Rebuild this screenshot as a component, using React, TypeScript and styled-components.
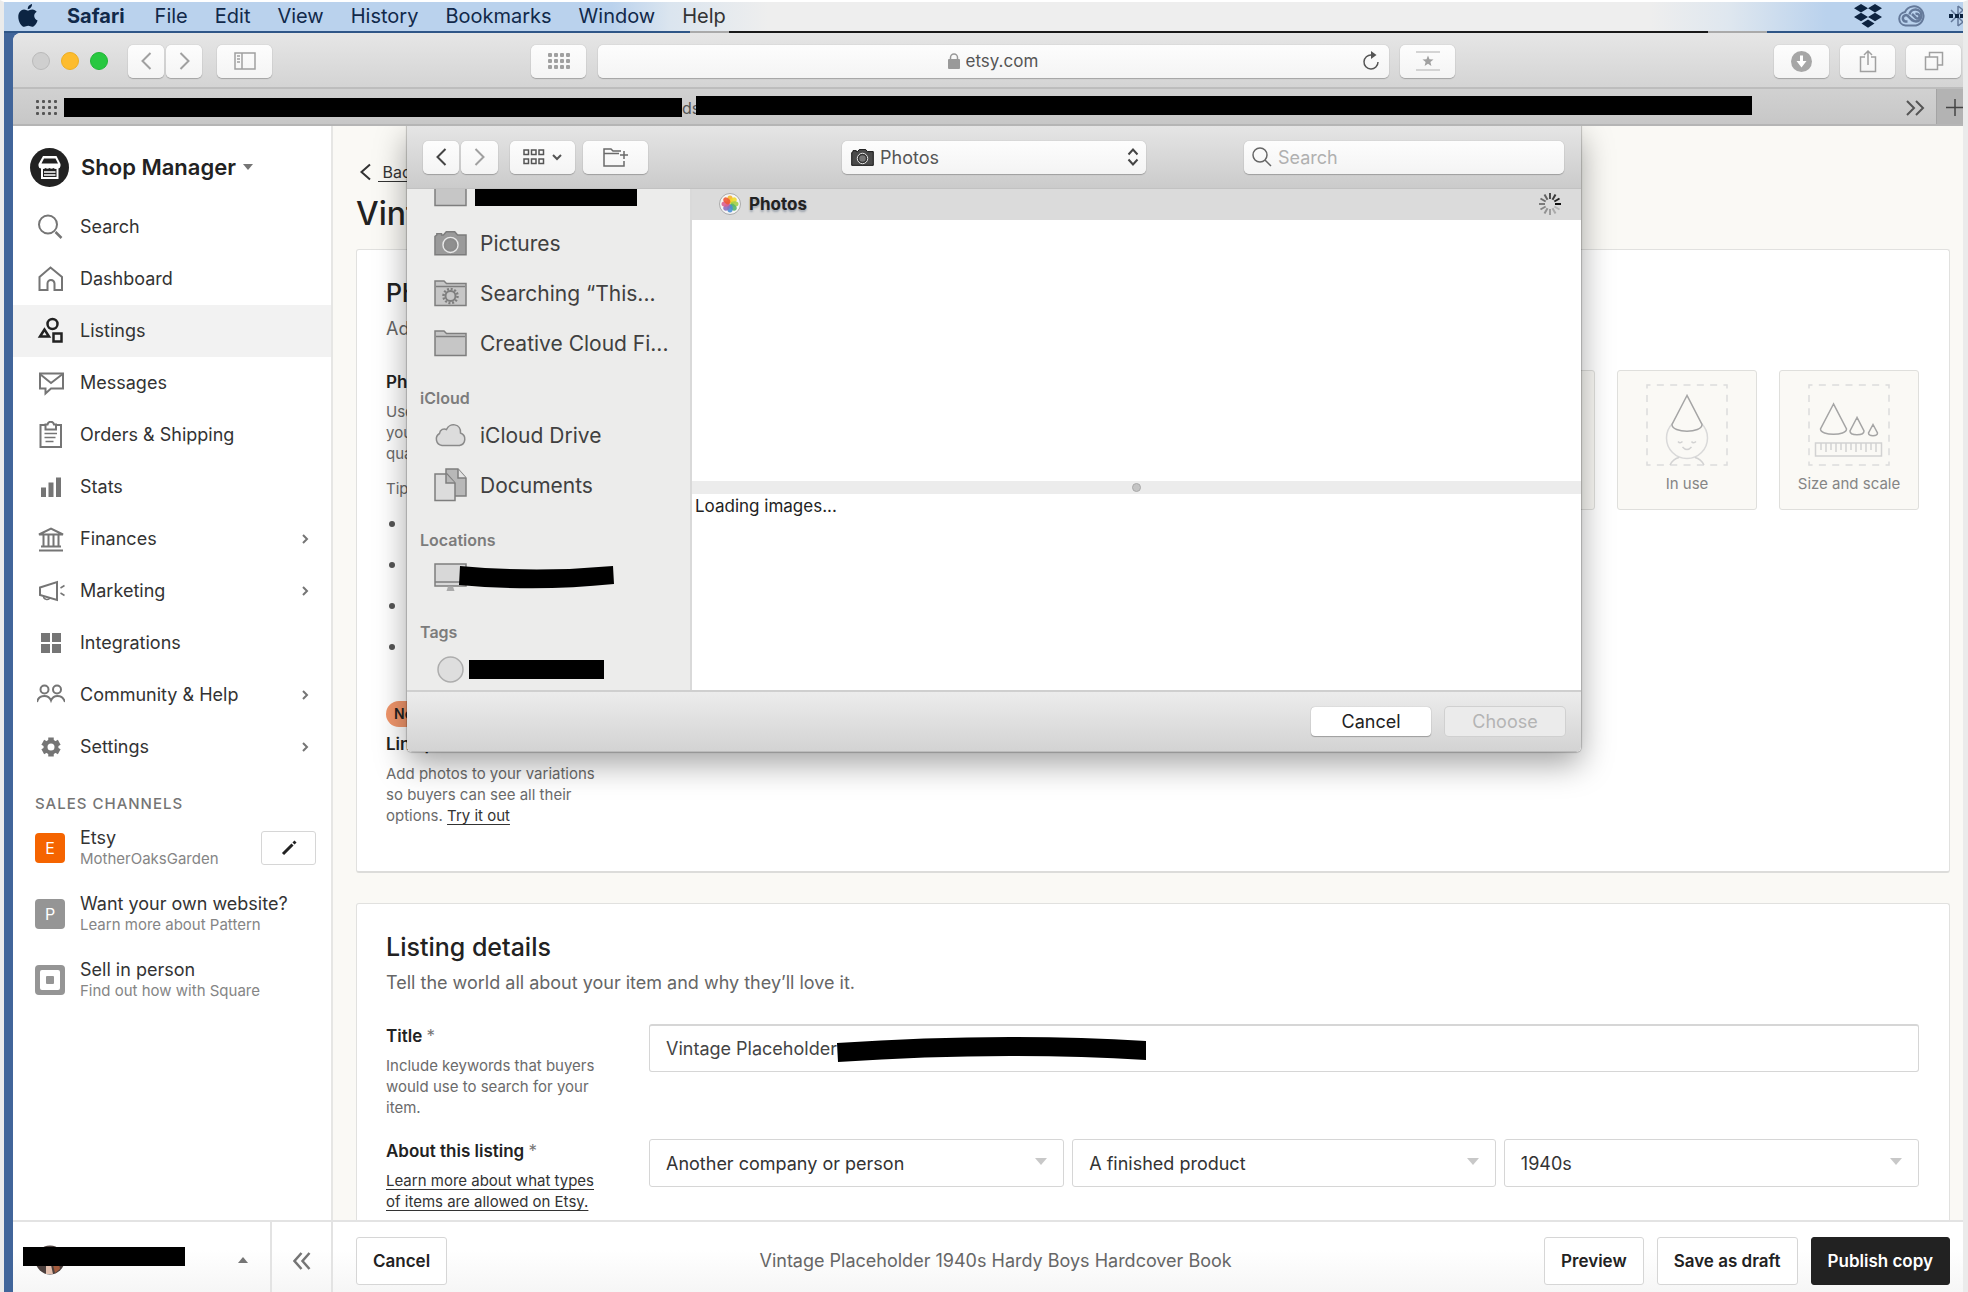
import React from "react";
import styled, { createGlobalStyle } from "styled-components";

const GlobalStyle = createGlobalStyle`
  *, *::before, *::after { box-sizing: border-box; }
  body { margin: 0; background: #ebebeb; color: #222; font-family: Inter, "Liberation Sans", sans-serif; }
  button, input, select { font: inherit; color: inherit; }
  h1, h2, h3, p, ul { margin: 0; padding: 0; }
`;

const Spacer = styled.span<{ $w: number }>`
  flex: none;
  width: ${(p) => p.$w}px;
`;

/* ---------- desktop and browser window ---------- */

const Desktop = styled.div`
  display: flex;
  flex-direction: column;
  height: 100vh;
  overflow: hidden;
  border-style: solid;
  border-color: #fff #ebebeb;
  border-width: 2px 5px 0 4px;
  background: linear-gradient(90deg, #41659a, #46699c);
`;

const MenuBar = styled.nav`
  position: relative;
  display: flex;
  flex: none;
  align-items: center;
  gap: 27px;
  height: 31px;
  padding: 0 0 4px 14px;
  overflow: hidden;
  font-size: 20px;
  color: #11294a;
  background: linear-gradient(90deg, #bad2ed 31%, #dbe5ef 34%, #eee 39%, #eee 84%, #dfe7ef 88%, #bad2ed 93%);
  &::after {
    content: "";
    position: absolute;
    inset: auto 0 0 0;
    height: 2px;
    background: linear-gradient(90deg, #2f5687 35%, #aaa 35%, #aaa 37%, #191919 37%, #191919 87%, #aaa 87%, #aaa 90%, #2f5687 90%);
  }
`;

const MenuItem = styled.button<{ $bold?: boolean; $dark?: boolean }>`
  margin: ${(p) => (p.$bold ? "0 3px 0 2px" : "0")};
  padding: 0;
  border: 0;
  background: none;
  line-height: 26px;
  font-weight: ${(p) => (p.$bold ? 700 : 400)};
  color: ${(p) => (p.$dark ? "#333" : "inherit")};
`;

const MenuExtras = styled.div`
  display: flex;
  align-items: center;
  gap: 16px;
  margin-left: auto;
  flex: none;
`;

const Browser = styled.div`
  display: flex;
  flex: 1;
  flex-direction: column;
  min-height: 0;
  margin-left: 9px;
  overflow: hidden;
  border-top-left-radius: 8px;
  background: #fff;
`;

const Toolbar = styled.div`
  display: flex;
  flex: none;
  align-items: center;
  height: 56px;
  padding: 2px 2px 0 19px;
  border-bottom: 2px solid #bdbdbd;
  background: linear-gradient(#e6e6e6, #d4d4d4);
`;

const Lights = styled.div`
  display: flex;
  gap: 11px;
  margin-right: 20px;
`;

const Light = styled.button<{ $fill: string; $edge: string }>`
  width: 18px;
  height: 18px;
  padding: 0;
  border: 1px solid ${(p) => p.$edge};
  border-radius: 50%;
  background: ${(p) => p.$fill};
`;

const Group = styled.div<{ $gap: number }>`
  display: flex;
  flex: none;
  gap: ${(p) => p.$gap}px;
`;

const ToolButton = styled.button<{ $w: number }>`
  display: flex;
  flex: none;
  align-items: center;
  justify-content: center;
  gap: 7px;
  width: ${(p) => p.$w}px;
  height: 33px;
  padding: 0;
  border: 0;
  border-radius: 5px;
  color: #a0a0a0;
  background: linear-gradient(#fdfdfd, #f4f4f4);
  box-shadow: 0 0 1px rgba(0, 0, 0, 0.3), 0 1px 1px rgba(0, 0, 0, 0.22);
`;

const Address = styled.div`
  display: flex;
  flex: 1;
  align-items: center;
  justify-content: center;
  height: 33px;
  margin: 0 11px 0 12px;
  border-radius: 5px;
  color: #555;
  background: linear-gradient(#fdfdfd, #f4f4f4);
  box-shadow: 0 0 1px rgba(0, 0, 0, 0.3), 0 1px 1px rgba(0, 0, 0, 0.22);
`;

const AddressLabel = styled.label`
  display: flex;
  align-items: center;
  gap: 6px;
  margin: 0 auto;
  padding-left: 42px;
`;

const AddressInput = styled.input`
  width: 80px;
  padding: 0;
  border: 0;
  outline: 0;
  background: none;
  font-size: 17px;
`;

const PlainButton = styled.button`
  display: flex;
  align-items: center;
  justify-content: center;
  width: 36px;
  height: 30px;
  padding: 0;
  border: 0;
  color: #555;
  background: none;
`;

const TabStrip = styled.div`
  display: flex;
  flex: none;
  align-items: center;
  height: 37px;
  padding: 2px 0 0 23px;
  border-bottom: 2px solid #b5b5b5;
  font-size: 16px;
  color: #555;
  background: linear-gradient(#d1d1d1, #c7c7c7);
`;

const Redaction = styled.span<{ $w: number; $h?: number }>`
  flex: none;
  width: ${(p) => p.$w}px;
  height: ${(p) => p.$h ?? 19}px;
  background: #000;
`;

const RaisedRedaction = styled(Redaction)`
  margin-bottom: 4px;
`;

const Clip = styled.span`
  width: 14px;
  overflow: hidden;
  white-space: nowrap;
`;

const NewTab = styled.button`
  display: flex;
  align-items: center;
  align-self: stretch;
  justify-content: flex-end;
  width: 27px;
  margin: -2px 0 0 11px;
  padding: 2px 0 0;
  border: 0;
  border-left: 1px solid #a4a4a4;
  color: #444;
  background: #b3b3b3;
`;

const TabOverflow = styled.button`
  display: flex;
  margin-left: auto;
  padding: 0;
  border: 0;
  color: #555;
  background: none;
`;

/* ---------- shop page ---------- */

const Page = styled.div`
  position: relative;
  display: flex;
  flex: 1;
  flex-direction: column;
  min-height: 0;
`;

const Columns = styled.div`
  display: flex;
  flex: 1;
  min-height: 0;
`;

const SideBar = styled.aside`
  flex: none;
  width: 320px;
  border-right: 2px solid #e6e6e4;
  background: #fff;
`;

const ShopSwitch = styled.button`
  display: flex;
  align-items: center;
  gap: 7px;
  height: 75px;
  padding: 7px 0 0 17px;
  border: 0;
  background: none;
  font-size: 22px;
  font-weight: 600;
  line-height: 30px;
  & > svg { margin-right: 5px; }
`;

const Caret = styled.span<{ $up?: boolean; $tone?: string; $size?: number }>`
  width: 0;
  height: 0;
  border: ${(p) => p.$size ?? 5}px solid transparent;
  border-top: ${(p) => (p.$up ? "0" : `${(p.$size ?? 5) + 1}px solid ${p.$tone ?? "#757575"}`)};
  border-bottom: ${(p) => (p.$up ? `${(p.$size ?? 5) + 1}px solid ${p.$tone ?? "#757575"}` : "0")};
`;

const NavLink = styled.a<{ $active?: boolean }>`
  display: flex;
  align-items: center;
  height: 52px;
  padding: 0 22px 0 24px;
  color: ${(p) => (p.$active ? "#222" : "#757575")};
  background: ${(p) => (p.$active ? "#f2f2f2" : "transparent")};
  text-decoration: none;
`;

const NavText = styled.span`
  flex: 1;
  margin-left: 15px;
  font-size: 18px;
  line-height: 24px;
  color: #333;
`;

const ChannelsTitle = styled.h3`
  margin: 21px 0 1px;
  padding-left: 22px;
  font-size: 15px;
  font-weight: 500;
  line-height: 20px;
  letter-spacing: 1px;
  color: #757575;
`;

const Channel = styled.div`
  display: flex;
  align-items: center;
  height: 66px;
  padding: 0 15px 0 22px;
`;

const ChannelBadge = styled.span<{ $bg: string }>`
  display: flex;
  align-items: center;
  justify-content: center;
  width: 30px;
  height: 30px;
  border-radius: 4px;
  font-size: 16px;
  color: #fff;
  background: ${(p) => p.$bg};
`;

const ChannelText = styled.div`
  flex: 1;
  margin-left: 15px;
  font-size: 18px;
  line-height: 21px;
  color: #333;
`;

const ChannelHint = styled.p`
  font-size: 15px;
  line-height: 21px;
  color: #858585;
`;

const OutlineButton = styled.button<{ $solid?: boolean }>`
  display: flex;
  flex: none;
  align-items: center;
  justify-content: center;
  height: 48px;
  padding: 0 16px;
  border: 1px solid ${(p) => (p.$solid ? "#222" : "#d6d6d6")};
  border-radius: 3px;
  font-size: 17px;
  font-weight: 600;
  color: ${(p) => (p.$solid ? "#fff" : "#222")};
  background: ${(p) => (p.$solid ? "#222" : "#fff")};
`;

const EditButton = styled(OutlineButton)`
  width: 55px;
  height: 34px;
`;

const Main = styled.main`
  display: flex;
  flex: 1;
  flex-direction: column;
  min-width: 0;
  padding: 34px 13px 0 23px;
  overflow: hidden;
  background: #faf9f5;
`;

const BackRow = styled.div`
  display: flex;
  flex: none;
  align-items: center;
  gap: 6px;
  height: 24px;
  padding-left: 2px;
`;

const TextLink = styled.a`
  color: #333;
  text-decoration: underline;
  text-underline-offset: 3px;
`;

const BackLink = styled(TextLink)`
  font-size: 16px;
  white-space: pre;
`;

const PageTitle = styled.h1`
  flex: none;
  margin: 10px 0 15px;
  font-size: 32px;
  font-weight: 500;
  line-height: 40px;
`;

const Card = styled.section`
  flex: none;
  margin-bottom: 30px;
  padding: 27px 30px 24px 29px;
  border: 1px solid #e1e1df;
  border-bottom: 2px solid #dcdcda;
  border-radius: 3px;
  background: #fff;
`;

const CardTitle = styled.h2`
  font-size: 25px;
  font-weight: 500;
  line-height: 32px;
`;

const CardLead = styled.p`
  margin: 8px 0 29px;
  font-size: 18px;
  line-height: 24px;
  color: #666;
`;

const FieldRow = styled.div`
  display: grid;
  grid-template-columns: 215px minmax(0, 1fr);
  column-gap: 48px;
  margin-bottom: 21px;
`;

const FieldLabel = styled.label`
  display: block;
  font-size: 17px;
  font-weight: 600;
  line-height: 24px;
`;

const Star = styled.span`
  font-weight: 400;
  color: #757575;
`;

const Help = styled.p`
  margin-top: 7px;
  font-size: 15px;
  line-height: 21px;
  color: #6b6b6b;
  & + & { margin-top: 14px; }
`;

const Tips = styled.ul`
  margin-top: 15px;
  padding-left: 24px;
  list-style: none;
`;

const Tip = styled.li`
  position: relative;
  min-height: 40px;
  margin-bottom: 1px;
  font-size: 14px;
  line-height: 20px;
  color: #6b6b6b;
  &::before {
    content: "";
    position: absolute;
    left: -21px;
    top: 7px;
    width: 6px;
    height: 6px;
    border-radius: 50%;
    background: #555;
  }
`;

const NewBadge = styled.span`
  display: inline-block;
  margin: 23px 0 5px;
  padding: 0 8px;
  border-radius: 13px;
  font-size: 14px;
  font-weight: 600;
  line-height: 26px;
  background: #f1966b;
`;

const Thumbs = styled.div`
  display: flex;
  align-items: flex-start;
  justify-content: flex-end;
  gap: 22px;
`;

const Thumb = styled.button`
  display: flex;
  flex-direction: column;
  align-items: center;
  width: 140px;
  height: 140px;
  padding: 13px 0 0;
  border: 1px solid #dfdfdc;
  border-radius: 3px;
  font-size: 15px;
  line-height: 36px;
  color: #858585;
  background: #faf9f5;
`;

const FieldBox = styled.div`
  position: relative;
`;

const TextField = styled.input`
  display: block;
  width: 100%;
  height: 48px;
  padding: 0 16px;
  border: 1px solid #d6d6d6;
  border-top-width: 2px;
  border-radius: 3px;
  font-size: 18px;
  color: #444;
  background: #fff;
`;

const TitleRedaction = styled.svg`
  position: absolute;
  left: 188px;
  top: 12px;
`;

const Selects = styled.div`
  display: grid;
  grid-template-columns: 49fr 50fr 49fr;
  gap: 8px;
  align-items: start;
`;

const SelectBox = styled.div`
  position: relative;
  & > ${Caret} {
    position: absolute;
    right: 17px;
    top: 19px;
  }
`;

const SelectField = styled.select`
  display: block;
  width: 100%;
  height: 48px;
  padding: 0 16px;
  border: 1px solid #d6d6d6;
  border-radius: 3px;
  appearance: none;
  font-size: 18px;
  color: #333;
  background: #fff;
`;

const ActionBar = styled.footer`
  display: flex;
  flex: none;
  height: 72px;
  border-top: 2px solid #e3e3e3;
  background: linear-gradient(#fff 40%, #f6f6f6);
`;

const Account = styled.button`
  position: relative;
  display: flex;
  align-items: center;
  justify-content: space-between;
  width: 259px;
  padding: 6px 22px 0 10px;
  border: 0;
  border-right: 2px solid #e3e3e3;
  background: none;
`;

const AccountName = styled.span`
  position: relative;
  display: flex;
  align-items: center;
  height: 30px;
  padding-bottom: 8px;
  & > svg {
    position: absolute;
    left: 12px;
    top: 0;
  }
  & > ${Redaction} {
    position: relative;
  }
`;

const Collapse = styled.button`
  display: flex;
  align-items: center;
  justify-content: center;
  width: 61px;
  padding: 8px 0 0;
  border: 0;
  border-right: 2px solid #e3e3e3;
  color: #757575;
  background: none;
`;

const Actions = styled.div`
  display: flex;
  flex: 1;
  align-items: center;
  gap: 13px;
  padding: 7px 13px 0 23px;
`;

const ActionTitle = styled.p`
  flex: 1;
  text-align: center;
  font-size: 18px;
  color: #666;
`;

/* ---------- file picker sheet ---------- */

const Sheet = styled.div`
  position: absolute;
  z-index: 2;
  top: 0;
  left: 394px;
  right: 382px;
  display: flex;
  flex-direction: column;
  height: 626px;
  border-radius: 0 0 5px 5px;
  overflow: hidden;
  background: #fff;
`;

const SheetShade = styled.div`
  position: absolute;
  z-index: 1;
  inset: 0;
  overflow: hidden;
  pointer-events: none;
  &::before {
    content: "";
    position: absolute;
    top: 0;
    left: 394px;
    right: 382px;
    height: 626px;
    border-radius: 0 0 5px 5px;
    box-shadow: 0 0 1px 1px rgba(0, 0, 0, 0.2), 0 12px 32px rgba(0, 0, 0, 0.36);
  }
`;

const SheetHeader = styled.div`
  display: flex;
  flex: none;
  align-items: center;
  height: 63px;
  padding: 0 17px 0 16px;
  border-bottom: 1px solid #c2c2c2;
  background: linear-gradient(#e5e5e5, #cbcbcb);
`;

const SheetBody = styled.div`
  display: flex;
  flex: 1;
  min-height: 0;
`;

const FolderSelect = styled.label`
  position: relative;
  display: flex;
  align-items: center;
  width: 304px;
  height: 33px;
  margin: 0 98px 0 auto;
  border-radius: 5px;
  color: #444;
  background: linear-gradient(#fdfdfd, #f4f4f4);
  box-shadow: 0 0 1px rgba(0, 0, 0, 0.3), 0 1px 1px rgba(0, 0, 0, 0.22);
  & > svg {
    position: absolute;
    pointer-events: none;
  }
  & > svg:first-child { left: 9px; }
  & > svg:last-child { right: 7px; }
`;

const FolderSelectField = styled.select`
  width: 100%;
  height: 100%;
  padding: 0 38px;
  border: 0;
  appearance: none;
  font-size: 18px;
  color: #555;
  background: none;
`;

const SearchBox = styled.label`
  display: flex;
  align-items: center;
  gap: 6px;
  width: 320px;
  height: 33px;
  padding: 0 8px;
  border-radius: 5px;
  color: #666;
  background: linear-gradient(#fdfdfd, #f4f4f4);
  box-shadow: 0 0 1px rgba(0, 0, 0, 0.3), 0 1px 1px rgba(0, 0, 0, 0.22);
`;

const SearchInput = styled.input`
  flex: 1;
  min-width: 0;
  padding: 0;
  border: 0;
  outline: 0;
  font-size: 18px;
  background: none;
  &::placeholder { color: #b0b0b0; opacity: 1; }
`;

const Places = styled.div`
  flex: none;
  width: 285px;
  overflow: hidden;
  border-right: 2px solid #d9d9d9;
  background: #ececeb;
`;

const PlaceList = styled.div`
  margin-top: -21px;
`;

const PlaceHeading = styled.h3`
  height: 42px;
  padding: 19px 0 0 13px;
  font-size: 16px;
  font-weight: 600;
  line-height: 22px;
  color: #7c7c7c;
`;

const Place = styled.a`
  display: flex;
  align-items: center;
  gap: 13px;
  height: 50px;
  padding-left: 27px;
  font-size: 21px;
  white-space: nowrap;
  color: #404040;
  text-decoration: none;
`;

const Pull = styled.span<{ $by: number }>`
  display: flex;
  margin-left: -${(p) => p.$by}px;
`;

const Browse = styled.div`
  display: flex;
  flex: 1;
  flex-direction: column;
  min-width: 0;
`;

const LibraryRow = styled.div`
  display: flex;
  align-items: center;
  gap: 8px;
  height: 31px;
  padding: 0 19px 2px 27px;
  font-size: 17px;
  font-weight: 700;
  text-shadow: 0 2px 2px rgba(40, 60, 90, 0.35);
  background: #dbdbdb;
  & > svg:last-child { margin-left: auto; }
`;

const LibraryPane = styled.div`
  height: 261px;
`;

const Splitter = styled.div`
  display: flex;
  align-items: center;
  justify-content: center;
  height: 13px;
  background: #ececec;
  &::before {
    content: "";
    width: 9px;
    height: 9px;
    border: 1px solid #a9a9a9;
    border-radius: 50%;
    background: #c4c4c4;
  }
`;

const Status = styled.p`
  padding: 0 3px;
  font-size: 17px;
  line-height: 24px;
  color: #222;
`;

const SheetFooter = styled.div`
  display: flex;
  flex: none;
  align-items: center;
  justify-content: flex-end;
  gap: 14px;
  height: 62px;
  padding-right: 16px;
  border-top: 2px solid #cfcfcf;
  border-bottom: 1px solid #bcbcbc;
  background: linear-gradient(#ececec, #d3d3d3);
`;

const SheetButton = styled.button`
  width: 120px;
  height: 29px;
  padding: 0;
  border: 0;
  border-radius: 4px;
  font-size: 18px;
  color: #222;
  background: #fff;
  box-shadow: 0 0 1px rgba(0, 0, 0, 0.35), 0 1px 1px rgba(0, 0, 0, 0.25);
  &:disabled {
    color: #b4b4b4;
    background: #ebebeb;
    box-shadow: 0 0 0 1px #d0d0d0;
  }
`;

/* ---------- drawings ---------- */

type IconProps = { w: number; h?: number; box: string; sw?: number; children: React.ReactNode };

const Icon = ({ w, h = w, box, sw = 2, children }: IconProps) => (
  <svg width={w} height={h} viewBox={box} fill="none" stroke="currentColor" strokeWidth={sw} aria-hidden="true">
    {children}
  </svg>
);

type DotsProps = { cols: number; rows: number; step: number; size: number; w: number; h: number };

const Dots = ({ cols, rows, step, size, w, h }: DotsProps) => (
  <svg width={w} height={h} viewBox={`0 0 ${w} ${h}`} fill="currentColor" aria-hidden="true">
    {Array.from({ length: cols * rows }, (_, i) => (
      <rect key={i} x={(i % cols) * step} y={Math.floor(i / cols) * step} width={size} height={size} rx="1" />
    ))}
  </svg>
);

const Apple = () => (
  <svg width="20" height="24" viewBox="0 0 20 24" fill="#0c2443" aria-hidden="true">
    <path d="M14 0c.2 2.600-1.800 5-4.200 5.200C9.400 2.800 11.600.400 14 0ZM10 6.600c1 0 2.200-1.200 4.300-1.200 1.900 0 3.500 1 4.400 2.400-3.700 2.200-3.100 7.100.900 8.600-.9 2.800-3.200 6.300-5.400 6.400-1.600 0-2.200-1-4-1s-2.500 1-4 1C3.500 22.700.300 17.500.300 12.900c0-4.600 2.900-7.300 5.700-7.400 1.700 0 3 1.100 4 1.100Z" />
  </svg>
);

const Dropbox = () => (
  <svg width="28" height="26" viewBox="0 0 28 26" fill="#0d2340" aria-hidden="true">
    <path d="m7 1 7 4.200-7 4.300-7-4.300ZM21 1l7 4.200-7 4.300-7-4.300ZM7 9.700l7 4.300-7 4.200L0 14ZM21 9.700l7 4.300-7 4.200-7-4.200ZM14 16.500l6.500 4-6.500 4.200-6.500-4.200Z" />
  </svg>
);

const CreativeCloud = () => (
  <svg width="28" height="22" viewBox="0 0 28 22" fill="none" stroke="#64799a" aria-hidden="true">
    <path d="M7.500 20.500A6.800 6.800 0 0 1 7 7 9.700 9.700 0 1 1 18 20.500Z" strokeWidth="2" />
    <path d="M14.500 15.500 9.500 10.500A3.200 3.200 0 1 0 7.500 16.500h2M11.500 9.500a6 6 0 1 1 6.500 7c-2.500 0-4-1.500-5-2.500" strokeWidth="2.500" />
    <path d="m14 9 4 4c1.500 1.200 3.500.500 3.500-1.500s-2-3.200-4-2.500" strokeWidth="2.500" />
  </svg>
);

const Bluetooth = () => (
  <svg width="21" height="24" viewBox="-7 0 21 24" fill="none" stroke="#64799a" strokeWidth="1.500" aria-hidden="true">
    <path d="M2 6l12 12M2 18 14 6M9 2v20M9 2l5 4M9 22l5-4" />
    <path d="M0 12h4M6 12h4M11 12h3" stroke="#0d2340" strokeWidth="4" />
  </svg>
);

const Storefront = () => (
  <svg width="39" height="39" viewBox="0 0 39 39" aria-hidden="true">
    <circle cx="19.500" cy="19.500" r="19.500" fill="#222" />
    <path d="M13 8h13.500l4 8v2a2.800 2.800 0 0 1-3 2.500 3.200 3.200 0 0 1-4-.5 3.400 3.400 0 0 1-4 0 3.400 3.400 0 0 1-4 0 3.200 3.200 0 0 1-4 .5A2.800 2.800 0 0 1 8.500 18v-2Z" fill="#fff" />
    <path d="M14 10.500h11.500l2.500 5H11.500Z" fill="#222" />
    <path d="M12 19v11h15.500V19" fill="none" stroke="#fff" strokeWidth="2" />
    <path d="M14 24h11.500M14 27h11.500" stroke="#fff" strokeWidth="1.600" />
  </svg>
);

const gearTeeth = [0, 60, 120, 180, 240, 300];

const navIcons: Record<string, React.ReactNode> = {
  Search: <><circle cx="11" cy="11.500" r="9" /><path d="m18.500 19 6 6" strokeWidth="2.500" /></>,
  Dashboard: <path d="M2.500 12 13.500 2.500 25 12V25h-7.500v-6.500a3.500 3.500 0 0 0-7 0V25h-8Z" />,
  Listings: <><circle cx="15.500" cy="7" r="5" strokeWidth="2.500" /><path d="m7.500 12.500-4.500 7h9Z" strokeWidth="2.500" /><path d="M16.500 16.500h8v8h-8Z" strokeWidth="2.500" /></>,
  Messages: <><path d="M3 4.500h23v15H14l-5.500 5v-5H3Z" /><path d="m3.500 5.500 10.500 8.500L25 5.500" /></>,
  "Orders & Shipping": <><path d="M3.500 4h20.500v22H3.500Z" /><path d="M8.500 3.500v5h10.500v-5h-2a3.300 3.300 0 0 0-6.500 0Z" fill="#fff" /><path d="M7.500 12.500h12.500M7.500 16.500h11M8.500 20.500h8" strokeWidth="1.500" /></>,
  Stats: <path d="M6.500 24V14.500M14 24V9.500M21.500 24V4.500" strokeWidth="5" />,
  Finances: <><path d="m2 9.500 12-6 12 6Z" fill="#fff" /><path d="M6.500 10v11.500M11.500 10v11.500M16.500 10v11.500M21.500 10v11.500M4 21.500h20M2 25.500h24" /></>,
  Marketing: <><path d="M3 10.500 20 5v18L3 18Z" /><path d="M6.500 19a3.500 3.500 0 0 0 6.500 1.800M23.500 11l4-2.500M23.500 16l4 2.500" strokeWidth="1.500" /></>,
  Integrations: <path d="M4 4h9v9H4ZM15 4h9v9h-9ZM4 15h9v9H4ZM15 15h9v9h-9Z" fill="currentColor" stroke="none" />,
  "Community & Help": <><circle cx="7.500" cy="8.500" r="4" /><circle cx="20" cy="8.500" r="4" /><path d="M0 21c1-4.500 4-6 7.500-6s5.500 2 6.500 4.500c1-2.500 3-4.500 6.500-4.500s6 1.500 7.500 6" /></>,
  Settings: (
    <>
      <circle cx="14" cy="14" r="5.500" strokeWidth="4" />
      {gearTeeth.map((a) => <path key={a} d="M14 4.500v4" strokeWidth="5.500" transform={`rotate(${a} 14 14)`} />)}
    </>
  ),
};

const FolderShape = ({ gear }: { gear?: boolean }) => (
  <svg width="33" height="28" viewBox="0 0 33 28" fill="#c6c6c6" stroke="#7e7e7e" strokeWidth="1.500" aria-hidden="true">
    <path d="M1 26.500V2h9l2.500 2.500H32v22Z" />
    <path d="M2 7.500h29" />
    {gear && (
      <>
        <circle cx="16.500" cy="17" r="5" fill="none" strokeWidth="2" />
        <circle cx="16.500" cy="17" r="7" fill="none" strokeWidth="2.500" strokeDasharray="2 1.660" />
      </>
    )}
  </svg>
);

const CameraShape = ({ dark, w = 35, h = 26 }: { dark?: boolean; w?: number; h?: number }) => (
  <svg width={w} height={h} viewBox="0 0 35 26" aria-hidden="true">
    <path
      d="M1 25V5.500L3 4V2.500h5V4h2l3-3.500h9L25 4h9v21Z"
      fill={dark ? "#4a4a4a" : "#9a9a9a"}
      stroke={dark ? "#111" : "#7c7c7c"}
      strokeWidth="1.500"
    />
    <circle cx="17.500" cy="14.500" r="8" fill={dark ? "#333" : "#8b8b8b"} stroke="#e8e8e8" strokeWidth="1.500" />
    <circle cx="17.500" cy="14.500" r="5" fill={dark ? "#777" : "#8f8f8f"} />
  </svg>
);

const Pinwheel = () => {
  const petals = ["#f7b52c", "#f0dc2e", "#a3cf4a", "#56b56b", "#4a8fd6", "#8d6fc0", "#dd5f90", "#ee5a36"];
  return (
    <svg width="22" height="22" viewBox="0 0 22 22" aria-hidden="true">
      <circle cx="11" cy="11" r="10.500" fill="#f5f5f5" stroke="#aaa" />
      {petals.map((c, i) => (
        <ellipse key={c} cx="11" cy="6.500" rx="2.800" ry="4" fill={c} fillOpacity="0.900" transform={`rotate(${i * 45} 11 11)`} />
      ))}
    </svg>
  );
};

const Spinner = () => (
  <svg width="24" height="24" viewBox="0 0 24 24" stroke="#111" strokeWidth="2" aria-hidden="true">
    {Array.from({ length: 12 }, (_, i) => (
      <path key={i} d="M12 1v6" strokeOpacity={i <= 3 ? 0.7 + i * 0.1 : 0.12 + (i - 3) * 0.06} transform={`rotate(${i * 30} 12 12)`} />
    ))}
  </svg>
);

const DashedFrame = () => <path d="M1 1h80v80H1Z" stroke="#dcdcdc" strokeDasharray="7 6.330" strokeDashoffset="3.500" />;

const InUseArt = () => (
  <Icon w={82} box="0 0 82 82" sw={1.5}>
    <DashedFrame />
    <circle cx="41" cy="54" r="20.500" stroke="#d9d9d9" />
    <path d="M32 57.500q2 2.500 4.500 0M45.500 57.500q2 2.500 4.500 0M36.500 63q4.500 5 9 0M24 81q3-6 9-7.500M58 81q-3-6-9-7.500" stroke="#d2d2d2" />
    <path d="M41 11.500 26 40.500c0 9 30 9 30 0Z" fill="#faf9f5" stroke="#a5a5a5" />
  </Icon>
);

const ScaleArt = () => (
  <Icon w={82} box="0 0 82 82" sw={1.5}>
    <DashedFrame />
    <path d="M25.500 20 12.500 45c0 7 26 7 26 0ZM49 33.500 42 47c0 5 14 5 14 0ZM65 40.500 60.500 49c0 3.500 9 3.500 9 0Z" stroke="#a5a5a5" />
    <path d="M7.500 59h66v13h-66ZM13 59v7M18 59v9M23 59v7M28 59v9M33 59v7M38 59v9M43 59v7M48 59v9M53 59v7M58 59v9M63 59v7M68 59v9" stroke="#d2d2d2" />
  </Icon>
);

/* ---------- content ---------- */

const menus = ["File", "Edit", "View", "History", "Bookmarks", "Window", "Help"];

const navItems = [
  { name: "Search" },
  { name: "Dashboard" },
  { name: "Listings", active: true },
  { name: "Messages" },
  { name: "Orders & Shipping" },
  { name: "Stats" },
  { name: "Finances", more: true },
  { name: "Marketing", more: true },
  { name: "Integrations" },
  { name: "Community & Help", more: true },
  { name: "Settings", more: true },
];

const tips = [
  "Use natural light and no flash.",
  "Include a common object for scale.",
  "Show the item being used.",
  "Use a clean background.",
];

const selects = [
  { label: "Who made it?", value: "Another company or person" },
  { label: "What is it?", value: "A finished product" },
  { label: "When was it made?", value: "1940s" },
];

const FilePicker = () => (
  <>
    <SheetShade />
    <Sheet role="dialog" aria-label="Choose a file">
      <SheetHeader>
        <Group $gap={2}>
          <ToolButton $w={36} aria-label="Back"><Icon w={11} h={18} box="0 0 11 18"><path d="M9.500 1 1.500 9l8 8" stroke="#444" /></Icon></ToolButton>
          <ToolButton $w={37} aria-label="Forward"><Icon w={11} h={18} box="0 0 11 18"><path d="m1.500 1 8 8-8 8" /></Icon></ToolButton>
        </Group>
        <Spacer $w={12} />
        <Group $gap={8}>
          <ToolButton $w={65} aria-label="View options">
            <Icon w={22} h={16} box="0 0 22 16" sw={1.5}>
              <path d="M1 1h4.500v4.500H1ZM8.500 1H13v4.500H8.500ZM16 1h4.500v4.500H16ZM1 10h4.500v4.500H1ZM8.500 10H13v4.500H8.500ZM16 10h4.500v4.500H16Z" stroke="#555" />
            </Icon>
            <Icon w={10} h={7} box="0 0 10 7"><path d="m1 1 4 4 4-4" stroke="#555" /></Icon>
          </ToolButton>
          <ToolButton $w={65} aria-label="New folder">
            <Icon w={26} h={19} box="0 0 26 19" sw={1.5}><path d="M21 13v5H1V1h7l2 2h8M1 5.500h15M21 3v8M17 7h8" stroke="#6a6a6a" /></Icon>
          </ToolButton>
        </Group>
        <FolderSelect>
          <CameraShape dark w={23} h={17} />
          <FolderSelectField aria-label="Folder" defaultValue="Photos"><option>Photos</option></FolderSelectField>
          <Icon w={12} h={18} box="0 0 12 18"><path d="m1.500 6.500 4.500-5 4.500 5M1.500 11.500l4.500 5 4.500-5" /></Icon>
        </FolderSelect>
        <SearchBox>
          <Icon w={20} box="0 0 20 20" sw={1.5}><circle cx="8" cy="8" r="7" /><path d="m13 13 6 6" /></Icon>
          <SearchInput placeholder="Search" aria-label="Search files" />
        </SearchBox>
      </SheetHeader>
      <SheetBody>
        <Places>
          <PlaceList>
            <Place href="#"><FolderShape /><Pull $by={5}><Redaction $w={162} $h={26} /></Pull></Place>
            <Place href="#"><CameraShape w={33} h={25} />Pictures</Place>
            <Place href="#"><FolderShape gear />Searching “This...</Place>
            <Place href="#"><FolderShape />Creative Cloud Fi...</Place>
            <PlaceHeading>iCloud</PlaceHeading>
            <Place href="#">
              <svg width="33" height="24" viewBox="0 0 33 24" fill="#dcdcdc" stroke="#8a8a8a" strokeWidth="1.500" aria-hidden="true">
                <path d="M8 22.500a6.500 6.500 0 0 1-2.500-12C6 6.500 10 5 12.500 6.500c3-7.500 14.500-6 14 3.500a6.500 6.500 0 0 1-1 12.500Z" />
              </svg>
              iCloud Drive
            </Place>
            <Place href="#">
              <svg width="33" height="34" viewBox="0 0 33 34" fill="#b8b8b8" stroke="#7e7e7e" strokeWidth="1.500" aria-hidden="true">
                <path d="M12 1h12l8 9v18H12Z" />
                <path d="M24 1v9h8" fill="#e4e4e4" />
                <path d="M1 6h12l8 9v17.500H1Z" fill="#dcdcdc" />
                <path d="M12 6v9h9" />
              </svg>
              Documents
            </Place>
            <PlaceHeading>Locations</PlaceHeading>
            <Place href="#">
              <svg width="33" height="29" viewBox="0 0 33 29" fill="#d8d8d8" stroke="#7e7e7e" strokeWidth="1.500" aria-hidden="true">
                <path d="M1 1h31v22H1Z" />
                <path d="M1 19h31" />
                <path d="M14 23.500h5l1.500 4.500h-8Z" fill="#aaa" stroke="none" />
              </svg>
              <Pull $by={21}>
                <svg width="156" height="24" viewBox="0 0 156 24" aria-hidden="true"><path d="M1 1Q78 8 154 1l1 18Q78 27 0 20Z" fill="#000" /></svg>
              </Pull>
            </Place>
            <PlaceHeading>Tags</PlaceHeading>
            <Place href="#">
              <svg width="33" height="27" viewBox="0 0 33 27" aria-hidden="true"><circle cx="16.500" cy="13.500" r="12.500" fill="#dedede" stroke="#adadad" strokeWidth="1.500" /></svg>
              <Pull $by={11}><Redaction $w={135} /></Pull>
            </Place>
          </PlaceList>
        </Places>
        <Browse>
          <LibraryRow><Pinwheel />Photos<Spinner /></LibraryRow>
          <LibraryPane />
          <Splitter />
          <Status>Loading images...</Status>
        </Browse>
      </SheetBody>
      <SheetFooter>
        <SheetButton>Cancel</SheetButton>
        <SheetButton disabled>Choose</SheetButton>
      </SheetFooter>
    </Sheet>
  </>
);

const ShopSideBar = () => (
  <SideBar>
    <ShopSwitch><Storefront />Shop Manager<Caret /></ShopSwitch>
    {navItems.map((item) => (
      <NavLink key={item.name} href="#" $active={item.active}>
        <Icon w={28} box="0 0 28 28">{navIcons[item.name]}</Icon>
        <NavText>{item.name}</NavText>
        {item.more && <Icon w={8} h={10} box="0 0 8 10"><path d="m2 1 4 4-4 4" /></Icon>}
      </NavLink>
    ))}
    <ChannelsTitle>SALES CHANNELS</ChannelsTitle>
    <Channel>
      <ChannelBadge $bg="#f56400">E</ChannelBadge>
      <ChannelText>Etsy<ChannelHint>MotherOaksGarden</ChannelHint></ChannelText>
      <EditButton aria-label="Edit shop">
        <Icon w={16} box="0 0 16 16" sw={3}><path d="M2 14 11.500 4.500M12.500 3.500l2-2" /></Icon>
      </EditButton>
    </Channel>
    <Channel>
      <ChannelBadge $bg="#959595">P</ChannelBadge>
      <ChannelText>Want your own website?<ChannelHint>Learn more about Pattern</ChannelHint></ChannelText>
    </Channel>
    <Channel>
      <ChannelBadge $bg="#959595">
        <svg width="20" height="20" viewBox="0 0 20 20" aria-hidden="true"><rect width="20" height="20" rx="2" fill="#fff" /><rect x="6" y="6" width="8" height="8" rx="1" fill="#959595" /></svg>
      </ChannelBadge>
      <ChannelText>Sell in person<ChannelHint>Find out how with Square</ChannelHint></ChannelText>
    </Channel>
  </SideBar>
);

const ListingForm = () => (
  <Main>
    <BackRow>
      <Icon w={14} h={18} box="0 0 14 18"><path d="M12 1.500 3.500 9l8.500 7.500" stroke="#333" /></Icon>
      <BackLink href="#"> Back to listings</BackLink>
    </BackRow>
    <PageTitle>Vintage Placeholder</PageTitle>
    <Card>
      <CardTitle>Photos</CardTitle>
      <CardLead>Add as many as you can.</CardLead>
      <FieldRow>
        <div>
          <FieldLabel as="h3">Photos <Star>*</Star></FieldLabel>
          <Help>Use up to ten photos to show your item’s most important qualities.</Help>
          <Help>Tips:</Help>
          <Tips>{tips.map((t) => <Tip key={t}>{t}</Tip>)}</Tips>
          <NewBadge>New</NewBadge>
          <FieldLabel as="h3">Link photos</FieldLabel>
          <Help>Add photos to your variations so buyers can see all their options. <TextLink href="#">Try it out</TextLink></Help>
        </div>
        <Thumbs>
          <Thumb aria-label="Add a photo" />
          <Thumb><InUseArt />In use</Thumb>
          <Thumb><ScaleArt />Size and scale</Thumb>
        </Thumbs>
      </FieldRow>
    </Card>
    <Card>
      <CardTitle>Listing details</CardTitle>
      <CardLead>Tell the world all about your item and why they’ll love it.</CardLead>
      <FieldRow>
        <div>
          <FieldLabel htmlFor="title">Title <Star>*</Star></FieldLabel>
          <Help>Include keywords that buyers would use to search for your item.</Help>
        </div>
        <FieldBox>
          <TextField id="title" defaultValue="Vintage Placeholder" />
          <TitleRedaction width="309" height="27" viewBox="0 0 309 27" aria-hidden="true">
            <path d="M0 7Q160-4 309 5v19Q160 15 1 26Z" fill="#000" />
          </TitleRedaction>
        </FieldBox>
      </FieldRow>
      <FieldRow>
        <div>
          <FieldLabel htmlFor="about-0">About this listing <Star>*</Star></FieldLabel>
          <Help><TextLink href="#">Learn more about what types of items are allowed on Etsy.</TextLink></Help>
        </div>
        <Selects>
          {selects.map((s, i) => (
            <SelectBox key={s.label}>
              <SelectField id={`about-${i}`} aria-label={s.label} defaultValue={s.value}><option>{s.value}</option></SelectField>
              <Caret $tone="#c8c8c8" $size={6} />
            </SelectBox>
          ))}
        </Selects>
      </FieldRow>
    </Card>
  </Main>
);

const BrowserToolbar = () => (
  <Toolbar>
    <Lights>
      <Light $fill="#cfcfcf" $edge="#bababa" aria-label="Close" />
      <Light $fill="#fdbc2e" $edge="#eeae22" aria-label="Minimise" />
      <Light $fill="#28c840" $edge="#20b636" aria-label="Zoom" />
    </Lights>
    <Group $gap={15}>
      <Group $gap={2}>
        <ToolButton $w={36} aria-label="Back"><Icon w={11} h={18} box="0 0 11 18"><path d="M9.500 1 1.500 9l8 8" /></Icon></ToolButton>
        <ToolButton $w={36} aria-label="Forward"><Icon w={11} h={18} box="0 0 11 18"><path d="m1.500 1 8 8-8 8" /></Icon></ToolButton>
      </Group>
      <ToolButton $w={55} aria-label="Sidebar">
        <Icon w={22} h={18} box="0 0 22 18" sw={1.5}><path d="M1 1h20v16H1ZM8 1v16M3 4h3M3 7h3M3 10h3" /></Icon>
      </ToolButton>
    </Group>
    <Spacer $w={259} />
    <ToolButton $w={55} aria-label="Top sites"><Dots cols={4} rows={3} step={6} size={4} w={22} h={16} /></ToolButton>
    <Address>
      <AddressLabel>
        <svg width="12" height="16" viewBox="0 0 12 16" aria-hidden="true">
          <rect y="6" width="12" height="10" rx="1" fill="#999" />
          <path d="M2.500 7V4.500a3.500 3.500 0 0 1 7 0V7" fill="none" stroke="#999" strokeWidth="1.500" />
        </svg>
        <AddressInput defaultValue="etsy.com" aria-label="Address" />
      </AddressLabel>
      <PlainButton aria-label="Reload">
        <Icon w={18} h={20} box="0 0 18 20" sw={1.5}><path d="M9.500 4A7 7 0 1 0 16 11" /><path d="m9 0 5.500 4L9 8Z" fill="currentColor" stroke="none" /></Icon>
      </PlainButton>
    </Address>
    <ToolButton $w={55} aria-label="Favourites">
      <Icon w={26} h={20} box="0 0 26 20" sw={1.5}>
        <path d="M1 1h24M1 19h24" stroke="#c8c8c8" />
        <path d="m13 4.500 1.500 3.800 4 .200-3.100 2.500 1 3.900-3.400-2.200-3.400 2.200 1-3.900L7.500 8.500l4-.200Z" fill="currentColor" stroke="none" />
      </Icon>
    </ToolButton>
    <Spacer $w={319} />
    <Group $gap={11}>
      <ToolButton $w={55} aria-label="Downloads">
        <svg width="21" height="21" viewBox="0 0 21 21" aria-hidden="true"><circle cx="10.500" cy="10.500" r="10.500" fill="#a6a6a6" /><path d="M9 4.500h3V10h3.500l-5 6.500-5-6.500H9Z" fill="#fff" /></svg>
      </ToolButton>
      <ToolButton $w={55} aria-label="Share">
        <Icon w={18} h={24} box="0 0 18 24" sw={1.5}><path d="M6 8H1.500v14.500h15V8H12M9 16V2M5 6l4-4 4 4" /></Icon>
      </ToolButton>
      <ToolButton $w={55} aria-label="Tabs">
        <Icon w={20} h={20} box="0 0 20 20" sw={1.5}><path d="M1.500 6h12v12.500h-12ZM5.500 5.500v-4h13V14H14" /></Icon>
      </ToolButton>
    </Group>
  </Toolbar>
);

export default function App() {
  return (
    <>
      <GlobalStyle />
      <Desktop>
        <MenuBar>
          <Apple />
          <MenuItem $bold>Safari</MenuItem>
          {menus.map((m) => <MenuItem key={m} $dark={m === "Help"}>{m}</MenuItem>)}
          <MenuExtras><Dropbox /><CreativeCloud /><Bluetooth /></MenuExtras>
        </MenuBar>
        <Browser>
          <BrowserToolbar />
          <TabStrip>
            <Dots cols={4} rows={3} step={6} size={3} w={21} h={16} />
            <Spacer $w={7} />
            <Redaction $w={618} />
            <Clip>ds</Clip>
            <RaisedRedaction $w={1056} />
            <TabOverflow aria-label="More bookmarks">
              <Icon w={20} h={16} box="0 0 20 16"><path d="m2 1 7 7-7 7M11 1l7 7-7 7" /></Icon>
            </TabOverflow>
            <NewTab aria-label="New tab"><Icon w={17} box="0 0 17 17" sw={1.5}><path d="M9 0v17M0 8.500h17" /></Icon></NewTab>
          </TabStrip>
          <Page>
            <Columns>
              <ShopSideBar />
              <ListingForm />
            </Columns>
            <ActionBar>
              <Account aria-label="Account">
                <AccountName>
                  <svg width="30" height="30" viewBox="0 0 30 30" aria-hidden="true">
                    <circle cx="15" cy="15" r="14.500" fill="#4b3f3d" />
                    <path d="M11 29V18l5 2 2 9Z" fill="#e3bfae" />
                    <path d="m18 20 6-1 1 5-5 4Z" fill="#a35b3d" />
                  </svg>
                  <Redaction $w={162} />
                </AccountName>
                <Caret $up />
              </Account>
              <Collapse aria-label="Collapse sidebar">
                <Icon w={18} h={18} box="0 0 18 18" sw={2.5}><path d="M8.500 1 1.500 9l7 8M16.500 1l-7 8 7 8" /></Icon>
              </Collapse>
              <Actions>
                <OutlineButton>Cancel</OutlineButton>
                <ActionTitle>Vintage Placeholder 1940s Hardy Boys Hardcover Book</ActionTitle>
                <OutlineButton>Preview</OutlineButton>
                <OutlineButton>Save as draft</OutlineButton>
                <OutlineButton $solid>Publish copy</OutlineButton>
              </Actions>
            </ActionBar>
            <FilePicker />
          </Page>
        </Browser>
      </Desktop>
    </>
  );
}
